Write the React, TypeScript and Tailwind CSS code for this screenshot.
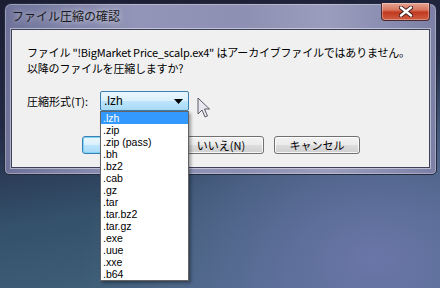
const formats = [
  ".lzh",
  ".zip",
  ".zip (pass)",
  ".bh",
  ".bz2",
  ".cab",
  ".gz",
  ".tar",
  ".tar.bz2",
  ".tar.gz",
  ".exe",
  ".uue",
  ".xxe",
  ".b64",
];

const ui = "font-['Noto_Sans_CJK_JP','Noto_Sans',sans-serif]";

function CloseButton() {
  return (
    <div className="flex h-[18px] w-[49px] items-center justify-center rounded-b-[4px] border border-t-0 border-[#4a2a30] bg-[linear-gradient(180deg,#e6a594_0%,#d7765f_40%,#c23a1f_55%,#cf5e44_100%)] shadow-[inset_0_0_0_1px_rgba(255,255,255,0.3)]">
      <svg width="14" height="11" viewBox="0 0 14 11">
        <path d="M2 1.5 L12 9.5 M12 1.5 L2 9.5" stroke="#3b1a1a" strokeWidth="4.2" strokeLinecap="round" />
        <path d="M2 1.5 L12 9.5 M12 1.5 L2 9.5" stroke="#ffffff" strokeWidth="2.4" strokeLinecap="round" />
      </svg>
    </div>
  );
}

function Button({ label, primary }: { label: string; primary?: boolean }) {
  return (
    <div
      className={
        primary
          ? "flex h-[18px] w-[86px] items-center justify-center rounded-[3px] border border-[#3c7fb1] bg-[linear-gradient(180deg,#eaf6fd_0%,#d9f0fc_50%,#bee6fd_51%,#a7d9f5_100%)] text-[11px] text-black shadow-[inset_0_0_0_1px_#7fd3f8]"
          : "flex h-[18px] w-[86px] items-center justify-center rounded-[3px] border border-[#707070] bg-[linear-gradient(180deg,#f2f2f2_0%,#ebebeb_50%,#dddddd_51%,#cfcfcf_100%)] text-[11px] text-black shadow-[inset_0_0_0_1px_rgba(255,255,255,0.8)]"
      }
    >
      {label}
    </div>
  );
}

function Cursor() {
  return (
    <svg className="absolute left-[197px] top-[97px]" width="14" height="22" viewBox="0 0 14 22">
      <path
        d="M1 1 L1 17 L5 13 L8 20 L10.5 19 L7.5 12 L12.5 12 Z"
        fill="#e4e4ec"
        fillOpacity="0.75"
        stroke="#3a3a48"
        strokeOpacity="0.8"
        strokeWidth="1"
        strokeLinejoin="round"
      />
    </svg>
  );
}

export default function App() {
  return (
    <div
      className={`relative h-[288px] w-[440px] overflow-hidden bg-[radial-gradient(ellipse_at_85%_90%,#6a76a8_0%,rgba(106,118,168,0)_55%),linear-gradient(170deg,#1b1e33_0%,#232a45_35%,#34506a_62%,#3c5c74_80%,#4a6786_100%)] pl-[4px] pt-[3px] ${ui}`}
    >
      {/* dialog window */}
      <div className="flex h-[172px] w-[433px] flex-col rounded-t-[7px] rounded-b-[5px] border border-[#262a3d] bg-[linear-gradient(90deg,#6e7299_0%,#9295b7_30%,#8d90b2_55%,#9a9dbd_75%,#7c80a6_100%)] px-[6px] pb-[6px] shadow-[inset_0_0_0_1px_rgba(255,255,255,0.3)]">
        <div className="flex h-[25px] items-start justify-between">
          <span className="pl-px pt-[4px] text-[12px] leading-[16px] text-[#1a1a22] [text-shadow:0_0_6px_rgba(255,255,255,0.9)]">
            ファイル圧縮の確認
          </span>
          <div className="-mt-px">
            <CloseButton />
          </div>
        </div>

        <div className="flex flex-1 flex-col border border-[#3d4058] bg-[#f0f0f0] pl-[15px] pt-[14px] text-[11px] text-black shadow-[0_0_0_1px_rgba(255,255,255,0.45)]">
          <p className="leading-[16px] tracking-[-0.2px] whitespace-nowrap">
            ファイル "!BigMarket Price_scalp.ex4" はアーカイブファイルではありません。
            <br />
            以降のファイルを圧縮しますか?
          </p>

          <div className="mt-[15px] flex h-[20px] items-center">
            <span className="w-[73px] leading-[16px]">圧縮形式(T):</span>
            <div className="relative z-10">
              <div className="flex h-[20px] w-[89px] items-center justify-between rounded-[2px] border border-[#3c7fb1] bg-[linear-gradient(180deg,#eaf6fd_0%,#d9f0fc_50%,#bee6fd_51%,#a7d9f5_100%)] pl-[3px] pr-[5px]">
                <span className="font-['Liberation_Sans',sans-serif] text-[12px] leading-[14px]">.lzh</span>
                <svg width="9" height="5" viewBox="0 0 9 5">
                  <path d="M0 0 L9 0 L4.5 5 Z" fill="#000" />
                </svg>
              </div>
              <ul className="absolute left-0 top-[20px] w-[89px] border border-[#646464] bg-white font-['Liberation_Sans',sans-serif] text-[10.5px] shadow-[2px_2px_3px_rgba(0,0,0,0.35)]">
                {formats.map((f, i) => (
                  <li
                    key={f}
                    className={
                      i === 0
                        ? "h-[12px] bg-[#3399ff] pl-[2px] leading-[12px] text-white"
                        : "h-[12px] pl-[2px] leading-[12px] text-black"
                    }
                  >
                    {f}
                  </li>
                ))}
              </ul>
            </div>
          </div>

          <div className="ml-[55px] mt-[25px] flex gap-[10px]">
            <Button label="はい(Y)" primary />
            <Button label="いいえ(N)" />
            <Button label="キャンセル" />
          </div>
        </div>
      </div>

      <Cursor />
    </div>
  );
}
